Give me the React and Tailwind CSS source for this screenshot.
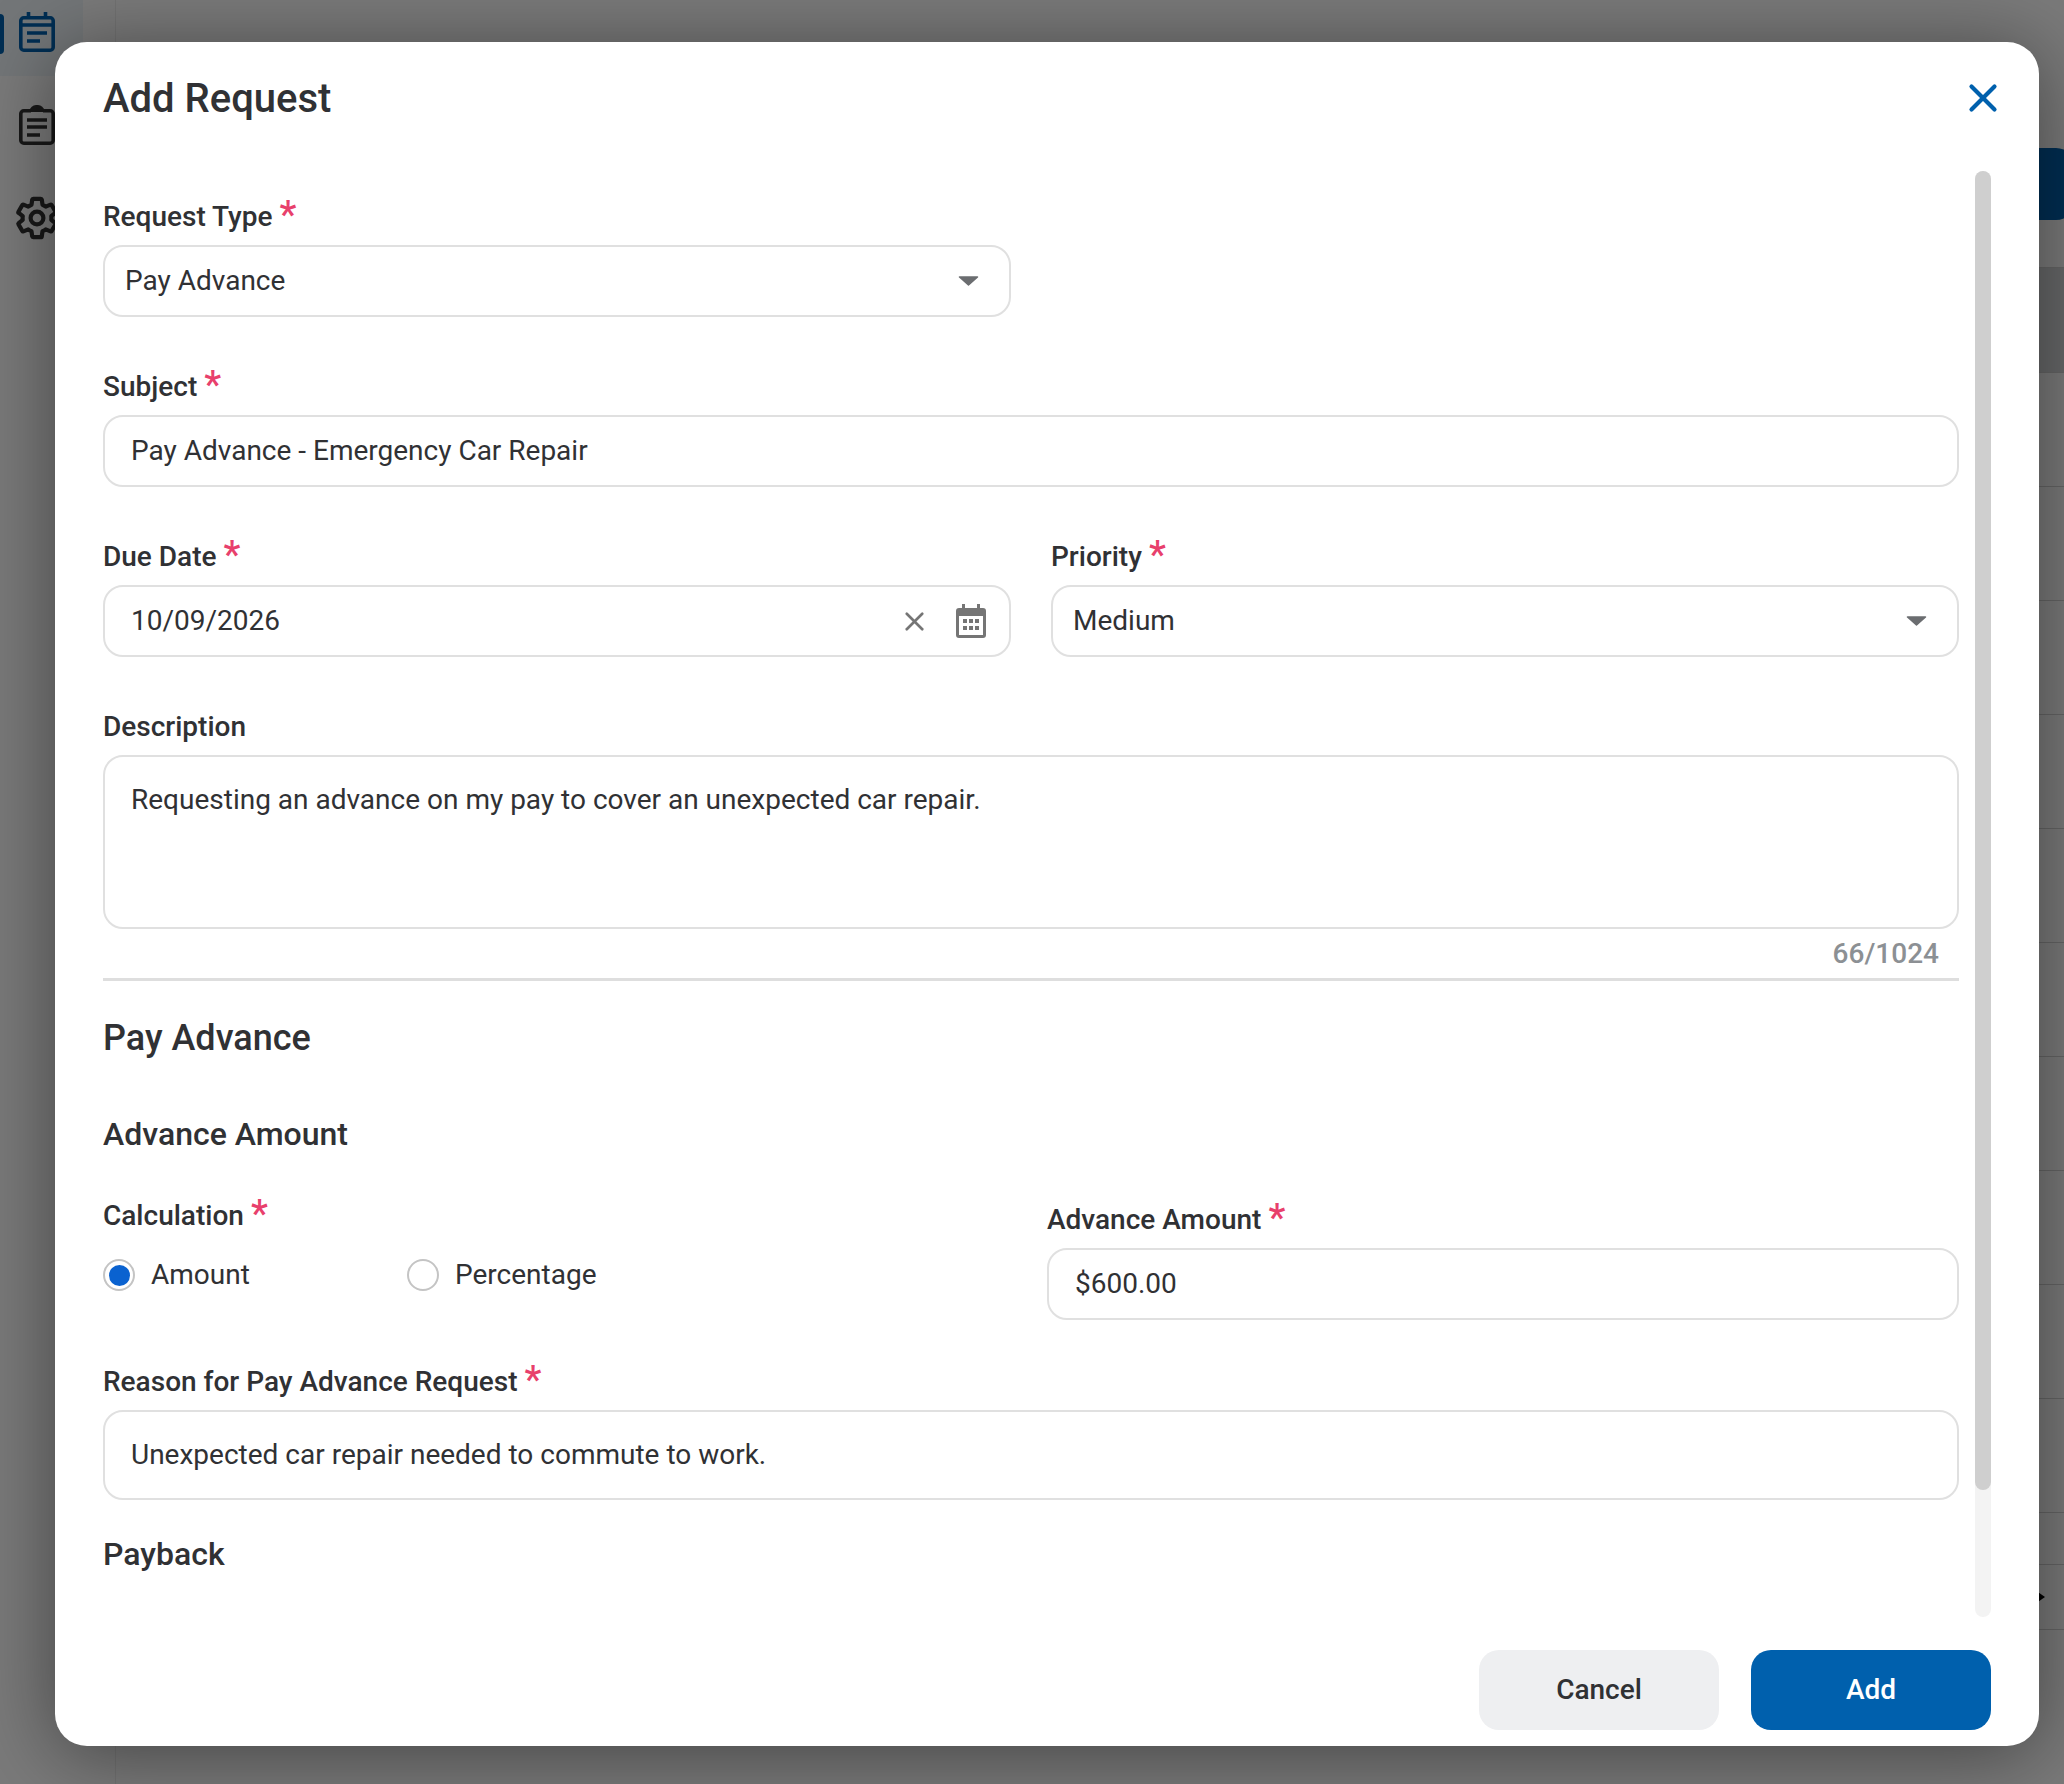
import React from 'react';
import { X } from 'lucide-react';

const CalendarNav = () => (
  <svg viewBox="0 0 36 40" className="w-[36px] h-[40px] text-[#0060ad]" fill="none" stroke="currentColor" strokeWidth="3.6">
    <rect x="1.8" y="5.8" width="32.4" height="32.4" rx="3" />
    <path d="M9.5 0v7M26.5 0v7M2 13h32" />
    <path d="M8 21h20M8 29h13" />
  </svg>
);

const ClipboardNav = () => (
  <svg viewBox="0 0 36 40" className="w-[36px] h-[40px] text-[#333333]" fill="none" stroke="currentColor" strokeWidth="3.6">
    <path d="M12 5.8H4.8a3 3 0 0 0-3 3v26.4a3 3 0 0 0 3 3h26.4a3 3 0 0 0 3-3V8.800a3 3 0 0 0-3-3H24" />
    <path d="M12 7c0-7 12-7 12 0" fill="currentColor" />
    <path d="M8 15h20M8 22h20M8 30h13" />
  </svg>
);

const GearNav = () => (
  <svg viewBox="0 0 24 24" className="w-[48px] h-[48px] text-[#333333]" fill="none" stroke="currentColor" strokeWidth="2.1" strokeLinejoin="round">
    <path d="M19.14 12.94c.04-.3.06-.61.06-.94 0-.32-.02-.64-.07-.94l2.03-1.58c.18-.14.23-.41.12-.61l-1.92-3.32c-.12-.22-.37-.29-.59-.22l-2.39.96c-.5-.38-1.03-.7-1.62-.94l-.36-2.54c-.04-.24-.24-.41-.48-.41h-3.84c-.24 0-.43.17-.47.41l-.36 2.54c-.59.24-1.13.57-1.62.94l-2.39-.96c-.22-.08-.47 0-.59.22L2.74 8.87c-.12.21-.08.47.12.61l2.03 1.58c-.05.3-.09.63-.09.94s.02.64.07.94l-2.03 1.58c-.18.14-.23.41-.12.61l1.92 3.32c.12.22.37.29.59.22l2.39-.96c.5.38 1.03.7 1.62.94l.36 2.54c.05.24.24.41.48.41h3.84c.24 0 .44-.17.47-.41l.36-2.54c.59-.24 1.13-.56 1.62-.94l2.39.96c.22.08.47 0 .59-.22l1.92-3.32c.12-.22.07-.47-.12-.61l-2.01-1.58z" />
    <circle cx="12" cy="12" r="3.2" />
  </svg>
);

const CalendarField = () => (
  <svg viewBox="0 0 30 34" className="w-[30px] h-[34px] text-[#757575]" fill="currentColor">
    <path d="M6 0h3v4h12V0h3v4h3a3 3 0 0 1 3 3v24a3 3 0 0 1-3 3H3a3 3 0 0 1-3-3V7a3 3 0 0 1 3-3h3V0zM3 12v19h24V12H3z" />
    <rect x="7" y="15" width="4" height="4" />
    <rect x="13" y="15" width="4" height="4" />
    <rect x="19" y="15" width="4" height="4" />
    <rect x="7" y="22" width="4" height="4" />
    <rect x="13" y="22" width="4" height="4" />
    <rect x="19" y="22" width="4" height="4" />
  </svg>
);

const Caret = () => (
  <svg viewBox="0 0 21 10" className="w-[21px] h-[10px] text-[#6b6d70]" fill="currentColor" stroke="currentColor" strokeWidth="1.5" strokeLinejoin="round">
    <path d="M1.5 1h18L10.5 9z" />
  </svg>
);

const Label = ({ children, required, className = '' }) => (
  <div className={`flex h-[40px] items-center pt-[2px] text-[28px] font-medium text-[#303134] ${className}`}>
    <span>{children}</span>
    {required && <span className="ml-[7px] -mt-[2px] self-start text-[38px] leading-[38px] text-[#e8406c]">*</span>}
  </div>
);

const Box = ({ children, className = '' }) => (
  <div className={`h-[72px] rounded-[20px] border-[2.5px] border-[#e0e0e0] bg-white flex items-center text-[28px] text-[#303134] ${className}`}>
    {children}
  </div>
);

const Heading = ({ children, className = '' }) => (
  <div className={`flex items-center pt-[2px] font-medium text-[#303134] ${className}`}>{children}</div>
);

const Radio = ({ checked, label, className = '' }) => (
  <div className={`flex items-center gap-[16px] ${className}`}>
    <span className="flex h-[32px] w-[32px] items-center justify-center rounded-full border-[2.5px] border-[#c4c4c4] bg-white">
      {checked && <span className="h-[21px] w-[21px] rounded-full bg-[#0a62d0]" />}
    </span>
    <span className="text-[28px] text-[#303134]">{label}</span>
  </div>
);

const App = () => {
  const rows = [0, 1, 2, 3, 4, 5, 6, 7, 8, 9];

  return (
    <div className="relative h-[1784px] w-full overflow-hidden bg-white font-['Roboto',sans-serif]">
      {/* page behind the dialog */}
      <div className="flex h-full">
        <div className="flex w-[116px] flex-col gap-[17px] border-r border-[#eeeeee] pr-[32px]">
          <div className="relative flex h-[76px] items-start justify-center bg-[#f0f6fb] pt-[12px] pr-[10px]">
            <span className="absolute left-0 top-[14px] h-[40px] w-[4px] rounded-r bg-[#0060ad]" />
            <CalendarNav />
          </div>
          <div className="flex h-[76px] items-start justify-center pt-[12px] pr-[10px]"><ClipboardNav /></div>
          <div className="flex h-[76px] items-start justify-center pt-[8px] pr-[10px]"><GearNav /></div>
        </div>
        <div className="flex flex-1 flex-col">
          <div className="h-[268px] border-b border-[#d4d4d4] pt-[148px]">
            <div className="ml-auto -mr-[12px] h-[72px] w-[300px] rounded-[20px] bg-[#0060ad]" />
          </div>
          <div className="h-[105px] border-b border-[#d4d4d4] bg-[#d8dadc]" />
          {rows.map((r) => (
            <div key={r} className="h-[114px] border-b border-[#d4d4d4]" />
          ))}
          <div className="h-[51px]" />
          <div className="flex h-[66px] items-center justify-end border-y border-[#d4d4d4]">
            <svg viewBox="0 0 10 14" className="mr-[19px] h-[14px] w-[10px] text-black" fill="currentColor">
              <path d="M0 0l10 7-10 7z" />
            </svg>
          </div>
        </div>
      </div>

      {/* overlay + dialog */}
      <div className="absolute inset-0 bg-black/[0.52]">
        <div className="ml-[55px] mt-[42px] flex h-[1704px] w-[1984px] flex-col rounded-[32px] bg-white pl-[48px] pr-[48px] shadow-[0_8px_80px_rgba(0,0,0,0.45)]">
          <div className="flex h-[129px] shrink-0 items-start justify-between pt-[31px]">
            <div className="text-[40px] font-medium leading-[52px] text-[#303134]">Add Request</div>
            <X className="-mr-[15px] mt-[2px] h-[46px] w-[46px] text-[#0060ad]" strokeWidth={2.2} />
          </div>

          <div className="flex h-[1446px] shrink-0 gap-[16px] overflow-hidden">
            <div className="w-[1856px] shrink-0 pt-[25px]">
              <Label required className="mb-[9px]">Request Type</Label>
              <Box className="w-[908px] justify-between pl-[20px] pr-[30px]">
                <span>Pay Advance</span>
                <Caret />
              </Box>

              <Label required className="mb-[9px] mt-[49px]">Subject</Label>
              <Box className="pl-[26px]">Pay Advance - Emergency Car Repair</Box>

              <div className="mt-[49px] flex gap-[40px]">
                <div className="w-[908px]">
                  <Label required className="mb-[9px]">Due Date</Label>
                  <Box className="justify-between pl-[26px] pr-[23px]">
                    <span>10/09/2026</span>
                    <span className="flex items-center gap-[26px]">
                      <X className="h-[31px] w-[31px] text-[#757575]" strokeWidth={2.1} />
                      <CalendarField />
                    </span>
                  </Box>
                </div>
                <div className="w-[908px]">
                  <Label required className="mb-[9px]">Priority</Label>
                  <Box className="justify-between pl-[20px] pr-[30px]">
                    <span>Medium</span>
                    <Caret />
                  </Box>
                </div>
              </div>

              <Label className="mb-[9px] mt-[49px]">Description</Label>
              <div className="h-[174px] rounded-[20px] border-[2.5px] border-[#e0e0e0] pl-[26px] pt-[25px] text-[28px] leading-[36px] text-[#303134]">
                Requesting an advance on my pay to cover an unexpected car repair.
              </div>
              <div className="flex h-[49px] items-center justify-end pr-[20px] text-[28px] font-medium text-[#8c9094]">66/1024</div>
              <div className="h-[3px] bg-[#dedede]" />

              <Heading className="mt-[32px] h-[48px] text-[36px]">Pay Advance</Heading>
              <Heading className="mt-[50px] h-[44px] text-[32px]">Advance Amount</Heading>

              <div className="mt-[40px] flex">
                <div className="w-[944px] shrink-0">
                  <Label required>Calculation</Label>
                  <div className="mt-[19px] flex">
                    <Radio checked label="Amount" className="w-[304px]" />
                    <Radio label="Percentage" />
                  </div>
                </div>
                <div className="flex-1 pt-[4px]">
                  <Label required className="mb-[9px]">Advance Amount</Label>
                  <Box className="pl-[26px]">$600.00</Box>
                </div>
              </div>

              <Label required className="mb-[9px] mt-[41px]">Reason for Pay Advance Request</Label>
              <Box className="h-[90px] pl-[26px]">Unexpected car repair needed to commute to work.</Box>

              <Heading className="mt-[31px] h-[44px] text-[32px]">Payback</Heading>
            </div>

            <div className="h-full w-[16px] shrink-0 rounded-full bg-[#f3f3f3]">
              <div className="h-[1319px] rounded-full bg-[#cfcfcf]" />
            </div>
          </div>

          <div className="flex flex-1 items-start justify-end gap-[32px] pt-[33px]">
            <button className="h-[80px] w-[240px] rounded-[20px] bg-[#eeeff1] text-[28px] font-medium text-[#303134]">Cancel</button>
            <button className="h-[80px] w-[240px] rounded-[20px] bg-[#0060ad] text-[28px] font-medium text-white">Add</button>
          </div>
        </div>
      </div>
    </div>
  );
};

export default App;
